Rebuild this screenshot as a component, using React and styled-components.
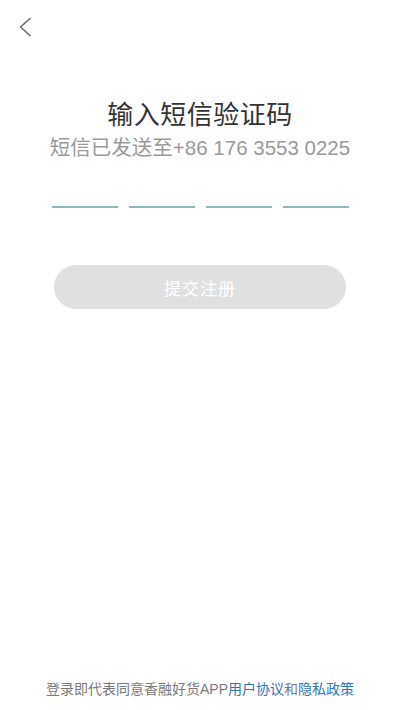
import React from 'react';
import { styled, createGlobalStyle } from 'styled-components';

const GlobalStyle = createGlobalStyle`
	html, body {
		margin: 0;
		padding: 0;
		background: #fff;
	}
	body {
		font-family: "Liberation Sans", "Noto Sans CJK SC", sans-serif;
	}
`;

function App() {
	const cells = [0, 1, 2, 3];

	return (
		<StPage>
			<GlobalStyle />
			<StTopBar>
				<StBackBtn aria-label="back">
					<svg width="14" height="20" viewBox="0 0 14 20" fill="none">
						<path d="M12 1.5 L2.5 10 L12 18.5" stroke="#6a6a6a" strokeWidth="1.6" strokeLinecap="round" strokeLinejoin="round" />
					</svg>
				</StBackBtn>
			</StTopBar>

			<StMain>
				<StTitle>输入短信验证码</StTitle>
				<StSubTitle>短信已发送至+86 176 3553 0225</StSubTitle>

				<StCodeRow>
					{cells.map(i => (
						<StCodeCell key={i} />
					))}
				</StCodeRow>

				<StSubmitBtn disabled>提交注册</StSubmitBtn>
			</StMain>

			<StFooter>
				登录即代表同意香融好货APP<StLink>用户协议</StLink>和<StLink>隐私政策</StLink>
			</StFooter>
		</StPage>
	);
}

export default App;

const StPage = styled.div`
	width: 400px;
	height: 710px;
	display: flex;
	flex-direction: column;
	box-sizing: border-box;
`;

const StTopBar = styled.div`
	height: 50px;
	display: flex;
	align-items: flex-start;
	padding: 15px 0 0 16px;
	box-sizing: border-box;
`;

const StBackBtn = styled.button`
	border: none;
	background: none;
	padding: 2px;
	cursor: pointer;
	display: flex;
`;

const StMain = styled.div`
	flex: 1;
	display: flex;
	flex-direction: column;
	align-items: center;
	padding-top: 45px;
`;

const StTitle = styled.div`
	font-size: 26px;
	line-height: 36px;
	color: #333;
	font-family: "Noto Sans CJK SC", sans-serif;
	letter-spacing: 0.5px;
`;

const StSubTitle = styled.div`
	margin-top: 3px;
	font-size: 20.5px;
	line-height: 28px;
	color: #9a9a9a;
`;

const StCodeRow = styled.div`
	margin-top: 32px;
	display: flex;
	gap: 11px;
`;

const StCodeCell = styled.div`
	width: 66px;
	height: 12px;
	border-bottom: 2px solid #8eb8bc;
`;

const StSubmitBtn = styled.button`
	margin-top: 57px;
	width: 292px;
	height: 44px;
	border: none;
	border-radius: 22px;
	background-color: #e0e0e0;
	color: #fff;
	font-size: 17px;
	font-family: "Noto Sans CJK SC", sans-serif;
	letter-spacing: 1px;
`;

const StFooter = styled.div`
	text-align: center;
	font-size: 14px;
	color: #7a7a7a;
	padding-bottom: 12px;
	line-height: 18px;
`;

const StLink = styled.span`
	color: #2f74b5;
`;
